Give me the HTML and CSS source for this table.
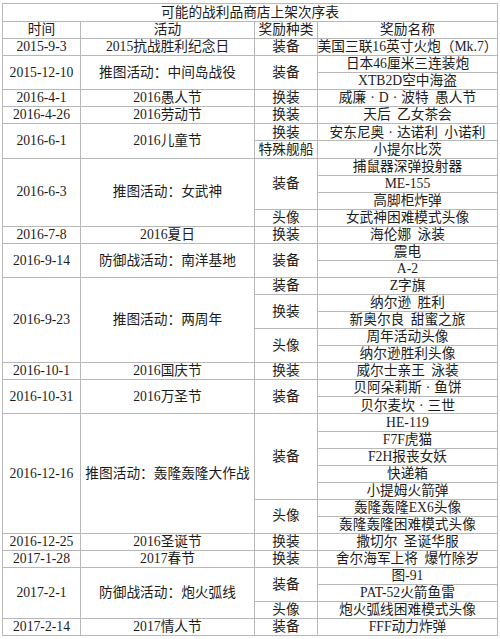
FILE: index.html
```html
<!DOCTYPE html>
<html lang="zh-CN">
<head>
<meta charset="utf-8">
<title>可能的战利品商店上架次序表</title>
<link rel="stylesheet" href="styles.css">
</head>
<body>
<div class="sheet">
  <div class="c title">可能的战利品商店上架次序表</div>

  <div class="c">时间</div><div class="c">活动</div><div class="c">奖励种类</div><div class="c">奖励名称</div>

  <div class="c">2015-9-3</div><div class="c">2015抗战胜利纪念日</div><div class="c">装备</div><div class="c">美国三联16英寸火炮（Mk.7）</div>

  <div class="c r2">2015-12-10</div><div class="c r2">推图活动：中间岛战役</div><div class="c r2">装备</div><div class="c">日本46厘米三连装炮</div>
  <div class="c">XTB2D空中海盗</div>

  <div class="c">2016-4-1</div><div class="c">2016愚人节</div><div class="c">换装</div><div class="c">威廉<span class="dot">·</span>D<span class="dot">·</span>波特 愚人节</div>

  <div class="c">2016-4-26</div><div class="c">2016劳动节</div><div class="c">换装</div><div class="c">天后 乙女茶会</div>

  <div class="c r2">2016-6-1</div><div class="c r2">2016儿童节</div><div class="c">换装</div><div class="c">安东尼奥<span class="dot">·</span>达诺利 小诺利</div>
  <div class="c">特殊舰船</div><div class="c">小提尔比茨</div>

  <div class="c r4">2016-6-3</div><div class="c r4">推图活动：女武神</div><div class="c r3">装备</div><div class="c">捕鼠器深弹投射器</div>
  <div class="c">ME-155</div>
  <div class="c">高脚柜炸弹</div>
  <div class="c">头像</div><div class="c">女武神困难模式头像</div>

  <div class="c">2016-7-8</div><div class="c">2016夏日</div><div class="c">换装</div><div class="c">海伦娜 泳装</div>

  <div class="c r2">2016-9-14</div><div class="c r2">防御战活动：南洋基地</div><div class="c r2">装备</div><div class="c">震电</div>
  <div class="c">A-2</div>

  <div class="c r5">2016-9-23</div><div class="c r5">推图活动：两周年</div><div class="c">装备</div><div class="c">Z字旗</div>
  <div class="c r2">换装</div><div class="c">纳尔逊 胜利</div>
  <div class="c">新奥尔良 甜蜜之旅</div>
  <div class="c r2">头像</div><div class="c">周年活动头像</div>
  <div class="c">纳尔逊胜利头像</div>

  <div class="c">2016-10-1</div><div class="c">2016国庆节</div><div class="c">换装</div><div class="c">威尔士亲王 泳装</div>

  <div class="c r2">2016-10-31</div><div class="c r2">2016万圣节</div><div class="c r2">装备</div><div class="c">贝阿朵莉斯<span class="dot">·</span>鱼饼</div>
  <div class="c">贝尔麦坎<span class="dot">·</span>三世</div>

  <div class="c r7">2016-12-16</div><div class="c r7">推图活动：轰隆轰隆大作战</div><div class="c r5">装备</div><div class="c">HE-119</div>
  <div class="c">F7F虎猫</div>
  <div class="c">F2H报丧女妖</div>
  <div class="c">快递箱</div>
  <div class="c">小提姆火箭弹</div>
  <div class="c r2">头像</div><div class="c">轰隆轰隆EX6头像</div>
  <div class="c">轰隆轰隆困难模式头像</div>

  <div class="c">2016-12-25</div><div class="c">2016圣诞节</div><div class="c">换装</div><div class="c">撒切尔 圣诞华服</div>

  <div class="c">2017-1-28</div><div class="c">2017春节</div><div class="c">换装</div><div class="c">舍尔海军上将 爆竹除岁</div>

  <div class="c r3">2017-2-1</div><div class="c r3">防御战活动：炮火弧线</div><div class="c r2">装备</div><div class="c">图-91</div>
  <div class="c">PAT-52火箭鱼雷</div>
  <div class="c">头像</div><div class="c">炮火弧线困难模式头像</div>

  <div class="c">2017-2-14</div><div class="c">2017情人节</div><div class="c">装备</div><div class="c">FFF动力炸弹</div>
</div>
</body>
</html>
```
FILE: styles.css
```css
html, body {
  margin: 0;
  padding: 0;
  background: #ffffff;
}

body {
  font-family: "Liberation Serif", "Noto Sans CJK SC", serif;
  font-size: 13.7px;
  color: #1c1c1c;
  padding: 3px 0 0 2px;
  border-top: 0;
}

.sheet {
  display: grid;
  grid-template-columns: 77px 173px 62px 179px;
  grid-template-rows: 17px;
  grid-auto-rows: 16.07px;
  gap: 1px;
  padding: 1px;
  background: #b8b8b8;
  width: max-content;
}

.c {
  background: #ffffff;
  display: flex;
  align-items: center;
  justify-content: center;
  white-space: nowrap;
  line-height: 1;
  word-spacing: 3px;
  overflow: visible;
}

.title {
  grid-column: 1 / -1;
}

.r2 { grid-row: span 2; }
.r3 { grid-row: span 3; }
.r4 { grid-row: span 4; }
.r5 { grid-row: span 5; }
.r7 { grid-row: span 7; }

.dot {
  padding: 0 4px;
}
```
